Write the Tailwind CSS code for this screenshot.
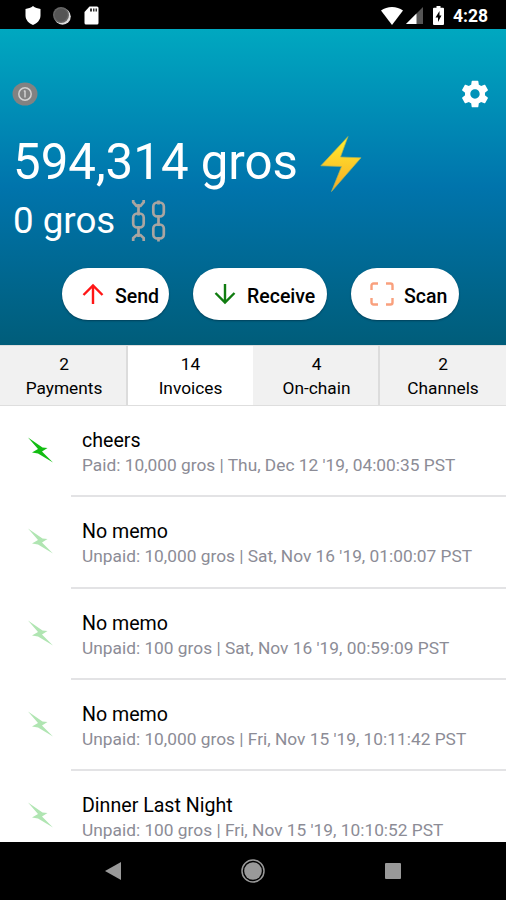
<!DOCTYPE html>
<html lang="en">

<head>
    <meta charset="UTF-8">
    <meta name="viewport" content="width=device-width, initial-scale=1.0">
    <title>Wallet</title>
    <script src="https://cdn.jsdelivr.net/npm/@tailwindcss/browser@4"></script>
</head>

<body class="bg-white font-['Roboto',sans-serif] text-black">
    <div class="flex h-[900px] w-[506px] flex-col overflow-hidden">

        <!-- Status bar -->
        <div class="flex h-[29px] shrink-0 items-center bg-black pt-0.5 pl-[25px] pr-[18px] text-white">
            <svg class="h-[19px] w-4" viewBox="0 0 16 19" fill="currentColor">
                <path d="M8 0c2 1.800 5 2.500 7.500 3v6.500C15.500 14 12 17.500 8 19 4 17.500.5 14 .5 9.500V3C3 2.500 6 1.800 8 0z" />
            </svg>
            <svg class="ml-3 h-[18px] w-[18px]" viewBox="0 0 18 18">
                <circle cx="9.500" cy="9.500" r="8.300" fill="#ddd" />
                <circle cx="8" cy="8" r="8" fill="#666" />
                <circle cx="8" cy="8" r="6.500" fill="#555" />
            </svg>
            <svg class="ml-[13px] h-[19px] w-[15px]" viewBox="0 0 15 19">
                <path d="M5.500.5H13A1.500 1.500 0 0 1 14.500 2v15a1.500 1.500 0 0 1-1.500 1.500H2A1.500 1.500 0 0 1 .5 17V6z" fill="#fff" />
                <path d="M6 2.500h2v3H6zM9 2.500h1.500v3H9zM11.500 2.500H13v3h-1.500z" fill="#333" />
            </svg>
            <svg class="ml-auto h-[18px] w-[22px]" viewBox="0 0 22 18" fill="currentColor">
                <path d="M11 18 0 3.600C6-1.200 16-1.200 22 3.600z" />
            </svg>
            <svg class="ml-[3px] h-[17px] w-[17px]" viewBox="0 0 17 17">
                <path d="M17 0v17H0z" fill="#555" />
                <path d="M10.500 6.500V17H0z" fill="#fff" />
            </svg>
            <svg class="ml-[10px] h-[19px] w-[11px]" viewBox="0 0 11 19">
                <path d="M3.500 0h4v1.700H10a1 1 0 0 1 1 1V18a1 1 0 0 1-1 1H1a1 1 0 0 1-1-1V2.700a1 1 0 0 1 1-1h2.500z" fill="#fff" />
                <path d="M6.500 5 2.500 11.500H5V16l3.500-6.500H6.500z" fill="#000" />
            </svg>
            <span class="ml-[9px] pt-0.5 text-[17.500px] leading-none font-bold">4:28</span>
        </div>

        <!-- Balance header -->
        <div class="flex h-[316px] shrink-0 flex-col bg-linear-to-b from-[#00a8c0] via-[#0074ac] to-[#005d7a] text-white">
            <div class="mt-[50px] flex h-[30px] items-center justify-between pl-3 pr-[15px]">
                <svg class="h-6 w-[26px]" viewBox="0 0 26 24" fill="none">
                    <ellipse cx="13" cy="12" rx="12.500" ry="11.500" fill="#828282" />
                    <circle cx="13" cy="12" r="6.200" stroke="#d2d2d2" stroke-width="1.500" />
                    <path d="M13 9v6.500M11.800 9h1.700" stroke="#d2d2d2" stroke-width="1.500" />
                </svg>
                <svg class="h-8 w-8" viewBox="0 0 24 24" fill="currentColor">
                    <path d="M19.430 12.980c.04-.32.07-.64.07-.98s-.03-.66-.07-.98l2.110-1.650c.19-.15.24-.42.12-.64l-2-3.460c-.12-.22-.39-.3-.61-.22l-2.490 1c-.52-.4-1.080-.73-1.690-.98l-.38-2.650C14.460 2.180 14.250 2 14 2h-4c-.25 0-.46.18-.49.42l-.38 2.650c-.61.25-1.170.59-1.690.98l-2.490-1c-.23-.09-.49 0-.61.22l-2 3.460c-.13.22-.07.49.12.64l2.110 1.650c-.04.32-.07.65-.07.98s.03.66.07.98l-2.110 1.650c-.19.15-.24.42-.12.64l2 3.460c.12.22.39.3.61.22l2.490-1c.52.4 1.080.73 1.690.98l.38 2.650c.03.24.24.42.49.42h4c.25 0 .46-.18.49-.42l.38-2.650c.61-.25 1.170-.59 1.690-.98l2.490 1c.23.09.49 0 .61-.22l2-3.460c.12-.22.07-.49-.12-.64l-2.110-1.650zM12 15.500c-1.930 0-3.500-1.570-3.500-3.500s1.570-3.500 3.500-3.500 3.500 1.570 3.500 3.500-1.570 3.500-3.500 3.500z" />
                </svg>
            </div>

            <div class="mt-[26px] flex h-[58px] items-center pl-[13px]">
                <span class="w-[307px] pb-0.5 text-[49.200px] leading-none whitespace-nowrap">594,314 gros</span>
                <svg class="h-[56px] w-[42px]" viewBox="0 0 42 56">
                    <defs>
                        <linearGradient id="bolt" x1="0" y1="0" x2="0" y2="1">
                            <stop offset="0" stop-color="#fff02e" />
                            <stop offset="1" stop-color="#f9a825" />
                        </linearGradient>
                    </defs>
                    <path d="M28 .5.800 29.800 21.500 30.500 11.500 55.500 41 21.800 20.500 21z" fill="url(#bolt)" stroke="#a9b25b" stroke-width=".7" stroke-linejoin="round" />
                </svg>
            </div>

            <div class="mt-px flex h-[54px] items-center pl-[13px]">
                <span class="w-[118px] text-[36.700px] leading-none whitespace-nowrap">0 gros</span>
                <svg class="h-[42px] w-[35px]" viewBox="0 0 35 42" fill="none" stroke="#aaa5a1" stroke-width="2.700">
                    <path d="M2.200 0v2.200L5.500 6h4L12.700 2.200V0M2.200 41v-3L5.500 35h4l3.200 3v3" />
                    <rect x="2.200" y="13.500" width="10.500" height="14" rx="4" />
                    <rect x="22.300" y="2.500" width="10.500" height="14" rx="4" />
                    <rect x="22.300" y="24.500" width="10.500" height="14" rx="4" />
                    <path d="M7.500 4v11.500M7.500 26v11M27.500 .5v4M27.500 15v11M27.500 37v4.500" />
                </svg>
            </div>

            <div class="mt-5 flex gap-6 pl-[62px] text-[19.500px] font-medium text-black">
                <button class="flex h-[52px] w-[107px] items-center rounded-full bg-white pl-5 shadow-[0_1px_2px_#00405a]">
                    <svg class="h-[22px] w-[22px] shrink-0" viewBox="0 0 22 22" fill="none" stroke="#ff1616" stroke-width="2.400">
                        <path d="M11 21V2M1.500 12 11 2.500l9.500 9.500" />
                    </svg>
                    <span class="ml-[11px] pt-1.5">Send</span>
                </button>
                <button class="flex h-[52px] w-[134px] items-center rounded-full bg-white pl-[21px] shadow-[0_1px_2px_#00405a]">
                    <svg class="h-[22px] w-[22px] shrink-0" viewBox="0 0 22 22" fill="none" stroke="#107c10" stroke-width="2.400">
                        <path d="M11 1v19M1.500 10l9.500 9.500 9.500-9.500" />
                    </svg>
                    <span class="ml-[11px] pt-1.5">Receive</span>
                </button>
                <button class="flex h-[52px] w-[108px] items-center rounded-full bg-white pl-[19px] shadow-[0_1px_2px_#00405a]">
                    <svg class="h-6 w-6 shrink-0" viewBox="0 0 24 24" fill="none" stroke="#f9a07d" stroke-width="2.400">
                        <path d="M1.500 8V3.500a2 2 0 0 1 2-2H8M16 1.500h4.500a2 2 0 0 1 2 2V8M22.500 16v4.500a2 2 0 0 1-2 2H16M8 22.500H3.500a2 2 0 0 1-2-2V16" />
                    </svg>
                    <span class="ml-[10px] pt-1.5">Scan</span>
                </button>
            </div>
        </div>

        <!-- Tabs -->
        <div class="grid h-[61px] shrink-0 grid-cols-[128px_125px_127px_126px] border-y border-[#dedede] bg-[#f1f1f1] text-center text-[17.300px] leading-6">
            <div class="border-r-2 border-[#dcdcdc] pt-1.5 pl-0.5">
                <div>2</div>
                <div>Payments</div>
            </div>
            <div class="bg-white pt-1.5">
                <div>14</div>
                <div>Invoices</div>
            </div>
            <div class="border-r-2 border-[#dcdcdc] pt-1.5 pl-0.5">
                <div>4</div>
                <div>On-chain</div>
            </div>
            <div class="pt-1.5">
                <div>2</div>
                <div>Channels</div>
            </div>
        </div>

        <!-- Invoices -->
        <div id="invoices" class="h-[436px] shrink-0 overflow-hidden bg-white"></div>

        <!-- Navigation bar -->
        <div class="flex h-[58px] shrink-0 items-center bg-black pl-[105px]">
            <svg class="h-[18px] w-4" viewBox="0 0 16 18" fill="#999">
                <path d="M16 0v18L0 9z" />
            </svg>
            <svg class="ml-[120px] h-6 w-6" viewBox="0 0 24 24" fill="none">
                <circle cx="12" cy="12" r="11" stroke="#999" stroke-width="1.500" />
                <circle cx="12" cy="12" r="8.800" fill="#999" />
            </svg>
            <div class="ml-[120px] h-4 w-4 rounded-[1px] bg-[#999]"></div>
        </div>
    </div>

    <script>
        const invoices = [
            { memo: "cheers", paid: true, amount: "10,000", date: "Thu, Dec 12 '19, 04:00:35 PST" },
            { memo: "No memo", paid: false, amount: "10,000", date: "Sat, Nov 16 '19, 01:00:07 PST" },
            { memo: "No memo", paid: false, amount: "100", date: "Sat, Nov 16 '19, 00:59:09 PST" },
            { memo: "No memo", paid: false, amount: "10,000", date: "Fri, Nov 15 '19, 10:11:42 PST" },
            { memo: "Dinner Last Night", paid: false, amount: "100", date: "Fri, Nov 15 '19, 10:10:52 PST" }
        ];

        const list = document.getElementById("invoices");

        invoices.forEach(invoice => {
            let div = document.createElement("div");
            div.className = "flex h-[91.300px] pl-7";
            div.innerHTML = `
                <svg class="mt-[31px] h-[26px] w-[26px] ${invoice.paid ? 'text-[#12bd12]' : 'text-[#b0e5b2]'}" viewBox="0 0 26 26" fill="currentColor">
                    <path d="M0 .5 14.500 10.500 19.500 11 14 14.500 25 25.500 10 16.500 4 15.500 10 12z" />
                </svg>
                <div class="ml-[17px] grow border-b-2 border-[#e3e3e5] pt-[23px] pl-[11px] whitespace-nowrap">
                    <div class="text-[19.600px] leading-6">${invoice.memo}</div>
                    <div class="text-[17.320px] leading-6 text-[#8c8c96]">${invoice.paid ? 'Paid' : 'Unpaid'}: ${invoice.amount} gros | ${invoice.date}</div>
                </div>`;
            list.appendChild(div);
        });
    </script>
</body>

</html>
